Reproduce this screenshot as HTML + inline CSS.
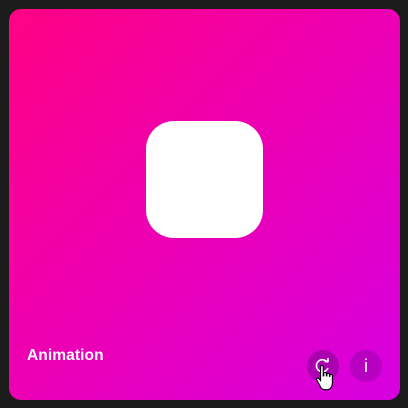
<!DOCTYPE html>
<html><head><style>
html,body{margin:0;padding:0;background:#1b1b1b;width:408px;height:408px;overflow:hidden}
.card{position:absolute;left:9px;top:9px;width:391px;height:391px;border-radius:12px;background:linear-gradient(135deg,#ff0383 0%,#ee00b0 45%,#d600e0 100%)}
.sq{position:absolute;left:137px;top:112px;width:117px;height:117px;border-radius:28px;background:#fff}
.t{position:absolute;left:18px;top:338px;font:bold 15.5px "Liberation Sans",sans-serif;color:#fff;letter-spacing:0.1px}
.b{position:absolute;top:341px;width:32px;height:32px;border-radius:50%;background:rgba(120,0,150,0.35)}
.b1{left:298px;background:rgba(110,0,130,0.45)}
.b2{left:341px;color:#fff;font:18px "Liberation Sans",sans-serif;text-align:center;line-height:32px}
</style></head><body>
<div class="card">
<div class="sq"></div>
<div class="t">Animation</div>
<div class="b b1"><svg width="32" height="32" viewBox="0 0 32 32"><path d="M20.5 12.5A6 6 0 1 0 21 18" fill="none" stroke="#fff" stroke-width="1.6"/><path d="M17.5 11.5h3.5v-3.5" fill="none" stroke="#fff" stroke-width="1.6"/></svg></div>
<div class="b b2">i</div>
</div>
<svg style="position:absolute;left:315px;top:364px" width="24" height="30" viewBox="0 0 22 28"><path d="M5 2.5c0-1.4 2.5-1.4 2.5 0V11h.5V9c0-1.4 2.4-1.4 2.4 0v2h.5v-1.2c0-1.4 2.4-1.4 2.4 0V11.5h.4v-.7c0-1.4 2.300-1.4 2.3 0V18c0 3-2 6-5 6H9c-2 0-3-1-4-2.5L1.5 15c-.8-1.3.8-2.5 1.9-1.3L5 15.5z" fill="#fff" stroke="#000" stroke-width="1"/></svg>
</body></html>
